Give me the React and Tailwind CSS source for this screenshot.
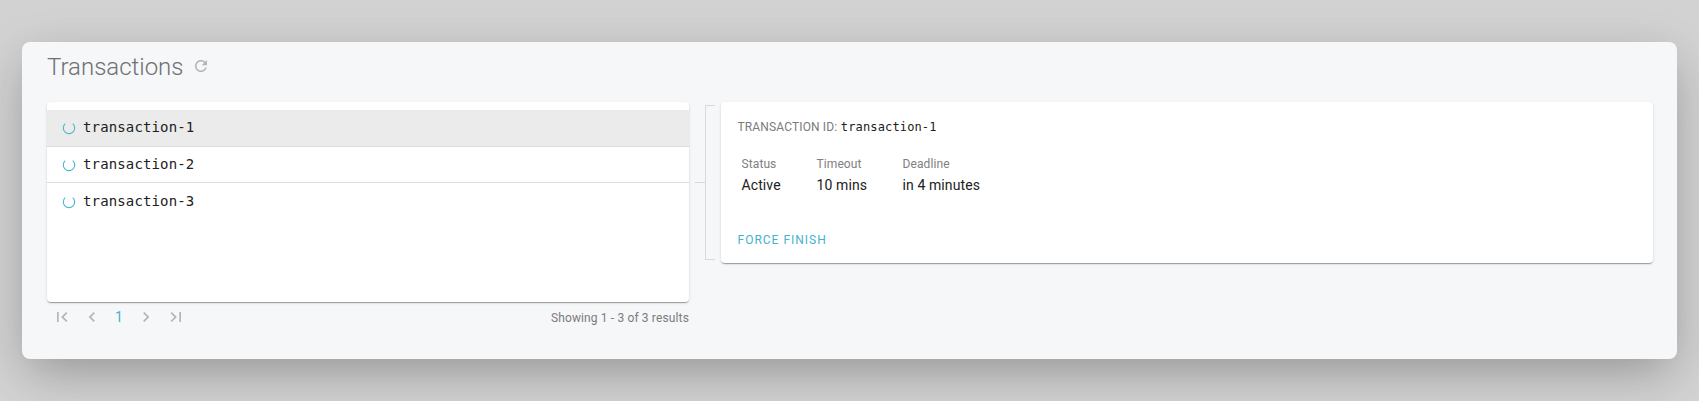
const transactions = ['transaction-1', 'transaction-2', 'transaction-3'];

const details = [
  { label: 'Status', value: 'Active', width: 'w-[75px]' },
  { label: 'Timeout', value: '10 mins', width: 'w-[86px]' },
  { label: 'Deadline', value: 'in 4 minutes', width: 'w-[100px]' },
];

const cardShadow =
  'shadow-[0_2px_1px_-1px_rgba(0,0,0,0.2),0_1px_1px_0_rgba(0,0,0,0.14),0_1px_3px_0_rgba(0,0,0,0.12)]';

function Icon({ d, className }) {
  return (
    <svg viewBox="0 0 24 24" fill="currentColor" className={className}>
      <path d={d} />
    </svg>
  );
}

function Spinner() {
  return (
    <svg viewBox="0 0 14 14" fill="none" stroke="#4db6d0" strokeWidth="1.1" className="size-[14px] shrink-0">
      <path d="M3.2 2.7A5.7 5.7 0 1 0 10.8 2.7" />
    </svg>
  );
}

function Pager() {
  return (
    <div className="flex h-[30px] items-center text-[#b3b4b5]">
      <Icon className="ml-[5px] size-5" d="M18.41 16.59L13.82 12l4.59-4.59L17 6l-6 6 6 6zM6 6h2v12H6z" />
      <Icon className="ml-[10px] size-5" d="M15.41 7.41L14 6l-6 6 6 6 1.41-1.41L10.83 12z" />
      <span className="ml-[10px] w-[14px] text-center text-[14px] leading-5 text-[#45b2cd]">1</span>
      <Icon className="ml-[10px] size-5" d="M10 6L8.59 7.41 13.17 12l-4.58 4.59L10 18l6-6z" />
      <Icon className="ml-[10px] size-5" d="M5.59 7.41L10.18 12l-4.59 4.59L7 18l6-6-6-6zM16 6h2v12h-2z" />
    </div>
  );
}

function Bracket() {
  return (
    <div className="mt-[3px] ml-[6px] flex h-[155px] items-center">
      <div className="h-px w-[10px] bg-[#d8d9db]" />
      <div className="h-full w-[10px] border-y border-l border-[#d8d9db]" />
    </div>
  );
}

export default function App() {
  return (
    <div className="h-[401px] w-[1699px] overflow-hidden bg-[#d2d2d2] px-[22px] pt-[42px] font-[Roboto,sans-serif]">
      <div className="h-[317px] rounded-lg bg-[#f5f7f9] pr-[24px] pl-[25px] shadow-[0_20px_46px_-10px_rgba(0,0,0,0.22),0_10px_50px_0_rgba(0,0,0,0.1)]">
        <header className="flex h-[60px] items-start">
          <h1 className="mt-[9px] text-[24px] leading-8 font-light text-[#6f7072]">Transactions</h1>
          <Icon
            className="mt-[15px] ml-[9px] size-[18px] text-[#b3b4b5]"
            d="M17.65 6.35C16.2 4.9 14.21 4 12 4c-4.42 0-7.99 3.58-7.99 8s3.57 8 7.99 8c3.73 0 6.84-2.55 7.73-6h-2.08c-.82 2.33-3.04 4-5.65 4-3.31 0-6-2.69-6-6s2.69-6 6-6c1.66 0 3.14.69 4.22 1.78L13 11h7V4z"
          />
        </header>
        <main className="flex items-start">
          <section className="w-[642px]">
            <ul className={`h-[200px] overflow-hidden rounded-[4px] bg-white pt-2 ${cardShadow}`}>
              {transactions.map((name, i) => (
                <li
                  key={name}
                  className={
                    i === 0
                      ? 'flex h-[37px] items-center gap-[7px] border-b border-[#dcdcdc] bg-[#ebebeb] px-[15px]'
                      : i === 1
                        ? 'flex h-9 items-center gap-[7px] border-b border-[#dcdcdc] px-[15px]'
                        : 'flex h-[37px] items-center gap-[7px] px-[15px]'
                  }
                >
                  <Spinner />
                  <span className="-mt-0.5 font-['DejaVu_Sans_Mono',monospace] text-[14px] leading-5 tracking-[0.14px] text-[#212121]">{name}</span>
                </li>
              ))}
            </ul>
            <footer className="flex items-center justify-between">
              <Pager />
              <p className="mt-px text-[12px] leading-5 tracking-[0.14px] text-[#7b7c7e]">Showing 1 - 3 of 3 results</p>
            </footer>
          </section>
          <Bracket />
          <section className={`ml-[6px] h-[161px] flex-1 rounded-[4px] bg-white px-[16.5px] pt-[15px] ${cardShadow}`}>
            <p className="flex items-center gap-[3.5px] text-[12px] leading-5 tracking-[0.14px] text-[#7b7b7b]">
              TRANSACTION ID:
              <span className="font-['DejaVu_Sans_Mono',monospace] text-[12px] text-[#212121]">transaction-1</span>
            </p>
            <dl className="mt-[17px] ml-[4px] flex tracking-[0.1px]">
              {details.map((item) => (
                <div key={item.label} className={item.width}>
                  <dt className="text-[12px] leading-5 text-[#808080]">{item.label}</dt>
                  <dd className="mt-px text-[14px] leading-5 whitespace-nowrap text-[#212121]">{item.value}</dd>
                </div>
              ))}
            </dl>
            <button className="mt-[35px] block text-[12px] leading-5 tracking-[1px] text-[#45b2cd]">FORCE FINISH</button>
          </section>
        </main>
      </div>
    </div>
  );
}
